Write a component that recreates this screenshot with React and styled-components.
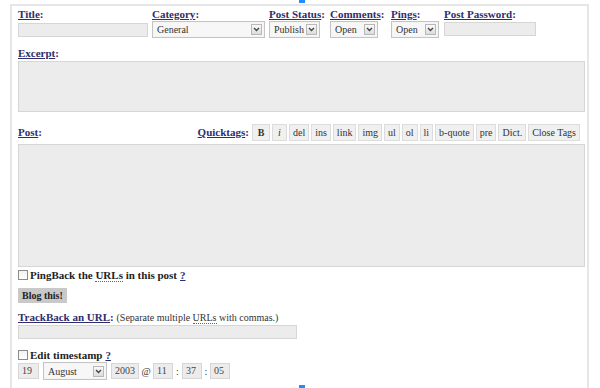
import React from "react";
import styled, { createGlobalStyle } from "styled-components";

const colors = {
  link: "#2e2e6e",
  text: "#333",
  field: "#ececec",
  fieldBorder: "#d6d6d6",
  frame: "#e6e6e6",
};

const Global = createGlobalStyle`
  html, body {
    margin: 0;
    padding: 0;
    background: #fff;
    font-family: "Liberation Serif", "Times New Roman", serif;
    color: ${colors.text};
  }
`;

const Page = styled.div`
  position: relative;
  width: 600px;
  height: 388px;
  overflow: hidden;
  padding-top: 4px;
  box-sizing: border-box;
`;

const Marker = styled.div`
  position: absolute;
  left: 299px;
  width: 6px;
  height: 3px;
  background: #1e8fff;
  ${(p) => (p.$bottom ? "bottom: 0;" : "top: 0;")}
`;

const Frame = styled.form`
  margin-left: 10px;
  width: 579px;
  height: 420px;
  box-sizing: border-box;
  border: 2px solid ${colors.frame};
  border-bottom: none;
  padding: 2px 2px 0 6px;
`;

const TopRow = styled.div`
  display: flex;
  gap: 4px;
`;

const Field = styled.div`
  display: flex;
  flex-direction: column;
  width: ${(p) => p.$w}px;
  flex: none;
`;

const Label = styled.label`
  display: block;
  height: 13px;
  line-height: 13px;
  font-size: 11px;
  font-weight: bold;
  color: ${colors.link};
  white-space: nowrap;
  margin-top: ${(p) => p.$top || 0}px;
`;

const LabelLink = styled.a`
  color: ${colors.link};
  text-decoration: underline;
`;

const Input = styled.div`
  box-sizing: border-box;
  width: ${(p) => (p.$w ? `${p.$w}px` : "100%")};
  height: ${(p) => p.$h || 14}px;
  margin-top: ${(p) => p.$top || 0}px;
  background: ${colors.field};
  border: 1px solid ${colors.fieldBorder};
  font-size: 10px;
  line-height: ${(p) => (p.$h || 14) - 2}px;
  padding-left: 3px;
  color: #444;
`;

const SelectBox = styled.div`
  box-sizing: border-box;
  width: ${(p) => p.$w}px;
  height: ${(p) => p.$h || 17}px;
  display: flex;
  align-items: center;
  justify-content: space-between;
  padding: 0 2px 0 4px;
  border: 1px solid #c4c4c4;
  box-shadow: inset 0 0 0 1px #f4f4f4;
  background: #f7f7f7;
  font-size: 10px;
  color: #333;
  flex: none;
`;

const Arrow = styled.span`
  box-sizing: border-box;
  width: 11px;
  height: 11px;
  border: 1px solid #b8b8b8;
  background: linear-gradient(#fafafa, #dcdcdc);
  display: flex;
  align-items: center;
  justify-content: center;
`;

const Select = ({ w, h, children }) => (
  <SelectBox $w={w} $h={h}>
    <span>{children}</span>
    <Arrow>
      <svg width="7" height="5" viewBox="0 0 7 5">
        <path d="M1 1 L3.5 3.5 L6 1" fill="none" stroke="#444" strokeWidth="1.4" />
      </svg>
    </Arrow>
  </SelectBox>
);

const PostHeader = styled.div`
  display: flex;
  align-items: center;
  justify-content: space-between;
  margin-top: 12px;
  height: 17px;
  padding-right: 5px;
`;

const Quicktags = styled.div`
  display: flex;
  align-items: center;
  gap: 2px;
`;

const QuickLabel = styled(Label)`
  margin-right: 1px;
  display: flex;
  align-items: center;
`;

const Tag = styled.span`
  box-sizing: border-box;
  height: 17px;
  line-height: 15px;
  padding: 0 3px;
  border: 1px solid #dcdcdc;
  background: #f0f0f0;
  font-size: 10px;
  color: #333;
  font-weight: ${(p) => (p.$bold ? "bold" : "normal")};
  font-style: ${(p) => (p.$italic ? "italic" : "normal")};
  min-width: ${(p) => p.$min || 0}px;
  text-align: center;
`;

const CheckRow = styled.div`
  display: flex;
  align-items: center;
  gap: 2px;
  height: 12px;
  margin-top: ${(p) => p.$top || 0}px;
  font-size: 11px;
  font-weight: bold;
  color: #222;
`;

const Box = styled.span`
  box-sizing: border-box;
  width: 10px;
  height: 10px;
  border: 1px solid #8a8a8a;
  background: linear-gradient(#f2f2f2, #fff);
  flex: none;
`;

const Acronym = styled.span`
  border-bottom: 1px dotted #666;
`;

const Help = styled.a`
  color: ${colors.link};
  text-decoration: underline;
  margin-left: 3px;
`;

const Button = styled.div`
  display: inline-block;
  margin-top: 7px;
  height: 15px;
  line-height: 15px;
  padding: 0 4px;
  background: #c9c9c9;
  font-size: 10px;
  font-weight: bold;
  color: #222;
`;

const Note = styled.span`
  font-size: 10px;
  font-weight: normal;
  color: #333;
`;

const TimeRow = styled.div`
  display: flex;
  align-items: center;
  height: 18px;
  margin-top: 1px;
  font-size: 10px;
  color: #333;
`;

const Sep = styled.span`
  width: ${(p) => p.$w}px;
  text-align: center;
  flex: none;
`;

const tags = [
  { t: "B", bold: true, min: 18 },
  { t: "i", italic: true, min: 15 },
  { t: "del" },
  { t: "ins" },
  { t: "link" },
  { t: "img" },
  { t: "ul" },
  { t: "ol" },
  { t: "li" },
  { t: "b-quote" },
  { t: "pre" },
  { t: "Dict." },
  { t: "Close Tags" },
];

export default function App() {
  return (
    <Page>
      <Global />
      <Marker />
      <Marker $bottom />
      <Frame>
        <TopRow>
          <Field $w={130}>
            <Label><LabelLink>Title</LabelLink>:</Label>
            <Input $top={2} />
          </Field>
          <Field $w={113}>
            <Label><LabelLink>Category</LabelLink>:</Label>
            <Select w={113}>General</Select>
          </Field>
          <Field $w={57}>
            <Label><LabelLink>Post Status</LabelLink>:</Label>
            <Select w={51}>Publish</Select>
          </Field>
          <Field $w={57}>
            <Label><LabelLink>Comments</LabelLink>:</Label>
            <Select w={48}>Open</Select>
          </Field>
          <Field $w={49}>
            <Label><LabelLink>Pings</LabelLink>:</Label>
            <Select w={48}>Open</Select>
          </Field>
          <Field $w={92}>
            <Label><LabelLink>Post Password</LabelLink>:</Label>
            <Input $top={1} />
          </Field>
        </TopRow>

        <Label $top={9}><LabelLink>Excerpt</LabelLink>:</Label>
        <Input $h={51} $top={1} />

        <PostHeader>
          <Label><LabelLink>Post</LabelLink>:</Label>
          <Quicktags>
            <QuickLabel><LabelLink>Quicktags</LabelLink>:</QuickLabel>
            {tags.map((q) => (
              <Tag key={q.t} $bold={q.bold} $italic={q.italic} $min={q.min}>
                {q.t}
              </Tag>
            ))}
          </Quicktags>
        </PostHeader>
        <Input $h={123} $top={3} />

        <CheckRow $top={2}>
          <Box />
          <span>
            PingBack the <Acronym>URLs</Acronym> in this post
            <Help>?</Help>
          </span>
        </CheckRow>

        <Button>Blog this!</Button>

        <Label $top={8}>
          <LabelLink>TrackBack an URL</LabelLink>: <Note>(Separate multiple <Acronym>URLs</Acronym> with commas.)</Note>
        </Label>
        <Input $w={279} $top={1} />

        <CheckRow $top={10}>
          <Box />
          <span>
            Edit timestamp
            <Help>?</Help>
          </span>
        </CheckRow>

        <TimeRow>
          <Input $w={21} $h={16}>19</Input>
          <Sep $w={4} />
          <Select w={64} h={18}>August</Select>
          <Sep $w={4} />
          <Input $w={28} $h={16}>2003</Input>
          <Sep $w={14}>@</Sep>
          <Input $w={20} $h={16}>11</Input>
          <Sep $w={9}>:</Sep>
          <Input $w={20} $h={16}>37</Input>
          <Sep $w={8}>:</Sep>
          <Input $w={20} $h={16}>05</Input>
        </TimeRow>
      </Frame>
    </Page>
  );
}
